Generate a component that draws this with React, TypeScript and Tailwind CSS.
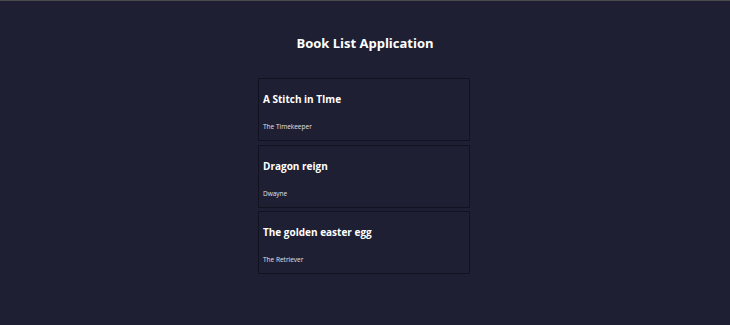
import React from "react";

const books = [
  { title: "A Stitch in TIme", author: "The Timekeeper" },
  { title: "Dragon reign", author: "Dwayne" },
  { title: "The golden easter egg", author: "The Retriever" },
];

export default function App() {
  return (
    <div
      className="w-[730px] h-[325px] bg-[#1e1f33] border-t border-[#4a4a4a] flex flex-col items-center text-white"
      style={{ fontFamily: '"Open Sans", "Noto Sans", sans-serif' }}
    >
      <h1 className="mt-[33px] text-[13px] leading-[18px] font-bold">Book List Application</h1>
      <div className="mt-[26px] mr-[2px] w-[212px] flex flex-col gap-[3.5px]">
        {books.map((b) => (
          <div key={b.title} className="h-[63px] border border-[#121320] px-[4px] flex flex-col">
            <div className="mt-[13px] text-[10px] leading-[14px] font-bold">{b.title}</div>
            <div className="mt-[16px] text-[6.5px] leading-[10px] text-[#e0e0e8]">{b.author}</div>
          </div>
        ))}
      </div>
    </div>
  );
}
